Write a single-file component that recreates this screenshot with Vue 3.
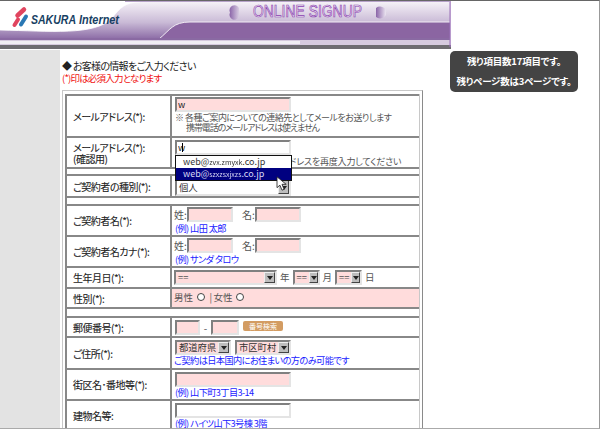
<template>
  <div class="page">
    <header class="banner">
      <svg class="banner-art" viewBox="0 0 451 50" width="451" height="50" xmlns="http://www.w3.org/2000/svg">
        <defs>
          <linearGradient id="sky" x1="0" y1="0" x2="0" y2="1">
            <stop offset="0" stop-color="#f5f1f7" />
            <stop offset="0.55" stop-color="#c9bad6" />
            <stop offset="1" stop-color="#8c6ca6" />
          </linearGradient>
          <linearGradient id="arrow" x1="0" y1="0" x2="1" y2="0">
            <stop offset="0" stop-color="#8a64a8" />
            <stop offset="1" stop-color="#d8cce2" />
          </linearGradient>
          <linearGradient id="arrow2" x1="0" y1="0" x2="1" y2="0">
            <stop offset="0" stop-color="#8a64a8" />
            <stop offset="1" stop-color="#ece6f1" />
          </linearGradient>
        </defs>
        <rect width="451" height="50" fill="#fff" />
        <path d="M0 30 C50 31 95 36 112 18 C120 8 125 2 140 2 L450 2 L450 39 L0 39 Z" fill="url(#sky)" />
        <path d="M0 30 C50 31 95 36 112 18 C120 8 125 2 140 2" fill="none" stroke="#fff" stroke-width="0.8" />
        <path d="M159 39 C170 30 173 22 190 22 L450 22 L450 38 L159 39 Z" fill="#8b65a2" />
        <path d="M159 39 C170 30 173 22 190 22 L450 22" fill="none" stroke="#f2edf5" stroke-width="1" />
        <rect y="38" width="450" height="2" fill="#8a6aa3" />
        <rect y="40" width="450" height="5" fill="#d6cade" />
        <rect y="41" width="300" height="3" fill="#f1eef3" />
        <rect y="45" width="451" height="4" fill="#6e6c70" />
        <rect x="449.5" y="1" width="1.2" height="46" fill="#9a70b8" />
        <rect y="1" x="125" width="325" height="1" fill="#b7a3c9" />
        <path d="M239 8 A5 5 0 0 0 230 12.5 A5 5 0 0 0 239 17 Z" fill="url(#arrow)" />
        <path d="M376 8 A6 5 0 0 1 386 12.5 A6 5 0 0 1 376 17 Z" fill="url(#arrow2)" />
        <text class="art-title" x="253" y="17" textLength="109" lengthAdjust="spacingAndGlyphs">ONLINE SIGNUP</text>
        <path d="M24 9.5 L17.5 15.5" stroke="#e0455f" stroke-width="4.5" stroke-linecap="round" />
        <path d="M18 19.5 L14.5 25" stroke="#e0455f" stroke-width="4" stroke-linecap="round" />
        <path d="M26 16.5 L21 24.5" stroke="#2a78b4" stroke-width="4" stroke-linecap="round" />
        <text class="art-logo" x="31" y="24" textLength="45" lengthAdjust="spacingAndGlyphs">SAKURA</text>
        <text class="art-logo thin" x="79" y="24" textLength="40" lengthAdjust="spacingAndGlyphs">Internet</text>
      </svg>
    </header>

    <div class="remain">
      <p>残り項目数17項目です。</p>
      <p>残りページ数は3ページです。</p>
    </div>

    <div class="body">
      <aside class="side"></aside>
      <main class="main">
        <h1 class="lead">◆ お客様の情報をご入力ください</h1>
        <p class="must">(*)印は必須入力となります</p>

        <div class="frame">
          <table class="form">
            <colgroup>
              <col class="col-label" />
              <col />
            </colgroup>
            <tbody>
              <tr class="h42">
                <th>メールアドレス(*):</th>
                <td>
                  <input class="text wide req" value="w" readonly />
                  <div class="note">※ 各種ご案内についての連絡先としてメールをお送りします<br /><span class="indent">携帯電話のメールアドレスは使えません</span></div>
                </td>
              </tr>
              <tr class="h31">
                <th>メールアドレス(*):<br />(確認用)</th>
                <td class="pad2">
                  <div class="combo">
                    <input class="text wide" value="w" readonly />
                    <span class="caret"></span>
                    <div class="suggest">
                      <div class="opt">web@<span class="smudge">zvx.zmyxk</span>.co.jp</div>
                      <div class="opt on">web@<span class="smudge">szxzsxjxzs</span>.co.jp</div>
                      <svg class="pointer" viewBox="0 0 14 18" width="12" height="15" xmlns="http://www.w3.org/2000/svg">
                        <path d="M1 1 L1 14 L4.5 11 L7 17 L9.5 16 L7 10 L12 10 Z" fill="#fff" stroke="#222" stroke-width="1" />
                      </svg>
                    </div>
                  </div>
                  <div class="note confirm">確認のため、上記のメールアドレスを再度入力してください</div>
                </td>
              </tr>
              <tr class="h7"><td colspan="2"></td></tr>
              <tr class="h22">
                <th>ご契約者の種別(*):</th>
                <td class="pad0">
                  <div class="select plain wide-sel"><span class="val">個人</span><span class="btn"></span></div>
                </td>
              </tr>
              <tr class="h8"><td colspan="2"></td></tr>
              <tr class="h31">
                <th>ご契約者名(*):</th>
                <td>
                  <div class="names">
                    <span>姓:</span><input class="text name req" readonly />
                    <span class="gap">名:</span><input class="text name req" readonly />
                  </div>
                  <div class="hint">(例) 山田 太郎</div>
                </td>
              </tr>
              <tr class="h31">
                <th>ご契約者名カナ(*):</th>
                <td>
                  <div class="names">
                    <span>姓:</span><input class="text name req" readonly />
                    <span class="gap">名:</span><input class="text name req" readonly />
                  </div>
                  <div class="hint">(例) サンダ タロウ</div>
                </td>
              </tr>
              <tr class="h21">
                <th>生年月日(*):</th>
                <td class="pad2">
                  <div class="birth">
                    <div class="select year"><span class="val">==</span><span class="btn"></span></div>
                    <span>年</span>
                    <div class="select small"><span class="val">==</span><span class="btn"></span></div>
                    <span>月</span>
                    <div class="select small"><span class="val">==</span><span class="btn"></span></div>
                    <span>日</span>
                  </div>
                </td>
              </tr>
              <tr class="h20">
                <th>性別(*):</th>
                <td class="reqcell">
                  <div class="sex">
                    <span>男性</span><span class="radio"></span>
                    <span class="bar">|</span>
                    <span>女性</span><span class="radio"></span>
                  </div>
                </td>
              </tr>
              <tr class="h9"><td colspan="2"></td></tr>
              <tr class="h20">
                <th>郵便番号(*):</th>
                <td class="pad2">
                  <div class="zip">
                    <input class="text z1 req" readonly />
                    <span class="dash">-</span>
                    <input class="text z2 req" readonly />
                    <span class="zipbtn">番号検索</span>
                  </div>
                </td>
              </tr>
              <tr class="h32">
                <th>ご住所(*):</th>
                <td class="pad2">
                  <div class="addr">
                    <div class="select pref"><span class="val">都道府県</span><span class="btn"></span></div>
                    <div class="select pref"><span class="val">市区町村</span><span class="btn"></span></div>
                  </div>
                  <div class="hint flush">ご契約は日本国内にお住まいの方のみ可能です</div>
                </td>
              </tr>
              <tr class="h31">
                <th>街区名･番地等(*):</th>
                <td class="pad2">
                  <input class="text wide req" readonly />
                  <div class="hint">(例) 山下町3丁目3-14</div>
                </td>
              </tr>
              <tr class="h31">
                <th>建物名等:</th>
                <td class="pad2">
                  <input class="text wide" readonly />
                  <div class="hint">(例) ハイツ山下3号棟 3階</div>
                </td>
              </tr>
            </tbody>
          </table>
        </div>
      </main>
    </div>
  </div>
</template>

<script setup>
</script>

<style>
html,
body {
  margin: 0;
  background: #fff;
}
</style>

<style scoped>
.page {
  position: relative;
  width: 600px;
  height: 429px;
  box-sizing: border-box;
  overflow: hidden;
  background: #fff;
  border-top: 1px solid #666;
  border-right: 1px solid #999;
  border-bottom: 1px solid #aaa;
  color: #333;
  font-family: "Noto Sans CJK JP", "Liberation Sans", sans-serif;
  font-size: 10px;
  line-height: 11px;
  font-feature-settings: "palt";
}

.banner {
  height: 50px;
  margin-top: -1px;
}

.banner-art {
  display: block;
}

.art-title {
  font-family: "Liberation Sans", sans-serif;
  font-size: 17px;
  fill: #efe8f3;
  stroke: #8b3fb0;
  stroke-width: 0.7px;
}

.art-logo {
  font-family: "Liberation Sans", sans-serif;
  font-size: 13px;
  font-weight: 700;
  font-style: italic;
  fill: #173f63;
}

.art-logo.thin {
  font-size: 12px;
}

.remain {
  position: absolute;
  left: 450px;
  top: 50px;
  width: 128px;
  height: 41px;
  box-sizing: border-box;
  padding-top: 5px;
  background: #444;
  border-radius: 5px;
  color: #fff;
  font-weight: 700;
  text-align: center;
  font-size: 9.5px;
  letter-spacing: -0.2px;
}

.remain p {
  margin: 0 0 9px;
}

.body {
  display: flex;
  height: 378px;
}

.side {
  width: 60px;
  flex: none;
  background: #e3e3e3;
}

.main {
  flex: 1;
  padding: 10px 0 0 2px;
  min-width: 0;
}

.lead {
  margin: 0;
  font-size: 10px;
  font-weight: 400;
  line-height: 12px;
  letter-spacing: -0.7px;
  color: #222;
}

.must {
  margin: 0;
  font-size: 9.5px;
  line-height: 12px;
  letter-spacing: -0.8px;
  color: #f01010;
}

.frame {
  width: 361px;
  box-sizing: border-box;
  margin-top: 6px;
  padding: 3px 2px 0;
  border: 1px solid;
  border-color: #c8c8c8 #8a8a8a #8a8a8a #c8c8c8;
}

.form {
  width: 100%;
  table-layout: fixed;
  border-collapse: separate;
  border-spacing: 0;
  border-right: 1px solid #c8c8c8;
}

.col-label {
  width: 105px;
}

.form th,
.form td {
  box-sizing: border-box;
  border-top: 2px solid #888;
  border-left: 2px solid #888;
}

.form th {
  padding: 0 0 0 6px;
  font-weight: 400;
  text-align: left;
  vertical-align: middle;
  letter-spacing: -0.5px;
  color: #222;
  -webkit-text-stroke: 0.1px #222;
}

.form td {
  padding: 1px 0 0 3px;
  vertical-align: top;
}

.form td.pad0 {
  padding-top: 0;
}

.form td.pad2 {
  padding-top: 2px;
}

.h7 td { height: 7px; }
.h8 td { height: 8px; }
.h9 td { height: 9px; }
.h20 th, .h20 td { height: 20px; }
.h21 th, .h21 td { height: 21px; }
.h22 th, .h22 td { height: 22px; }
.h31 th, .h31 td { height: 31px; }
.h32 th, .h32 td { height: 32px; }
.h42 th, .h42 td { height: 42px; }

.text {
  display: block;
  box-sizing: border-box;
  height: 15px;
  margin: 0;
  padding: 0 1px;
  background: #fff;
  border: 2px solid;
  border-color: #808080 #e4e4e4 #e4e4e4 #808080;
  border-radius: 0;
  outline: none;
  color: #222;
  font-family: inherit;
  font-size: 9px;
}

.req {
  background: #ffdcdc;
}

.wide {
  width: 116px;
}

.name {
  width: 46px;
}

.note {
  margin-top: 1px;
  color: #555;
  font-size: 9px;
  line-height: 10px;
  letter-spacing: -0.5px;
  white-space: nowrap;
}

.note.confirm {
  margin-top: 2px;
  padding-left: 8px;
  letter-spacing: -0.2px;
}

.indent {
  padding-left: 11px;
  letter-spacing: -1.1px;
}

.hint {
  color: #1a1aff;
  font-size: 9.2px;
  line-height: 10px;
  letter-spacing: -0.6px;
  white-space: nowrap;
}

.names + .hint {
  margin-top: 1px;
}

.hint.flush {
  margin-left: -1px;
}

.combo {
  position: relative;
  width: 116px;
}

.caret {
  position: absolute;
  left: 7px;
  top: 3px;
  width: 1px;
  height: 9px;
  background: #000;
}

.suggest {
  position: absolute;
  left: 0;
  top: 15px;
  width: 117px;
  height: 26px;
  box-sizing: border-box;
  background: #fff;
  border: 1px solid #111;
  z-index: 2;
}

.opt {
  height: 12px;
  padding-left: 7px;
  line-height: 12px;
  font-size: 9px;
  color: #333;
}

.opt.on {
  background: #000080;
  color: #d8d8f5;
}

.smudge {
  filter: blur(0.6px);
  font-size: 7px;
}

.pointer {
  position: absolute;
  left: 100px;
  top: 20px;
}

.select {
  display: flex;
  box-sizing: border-box;
  height: 15px;
  overflow: hidden;
  background: #ffdcdc;
  border: 2px solid;
  border-color: #808080 #e4e4e4 #e4e4e4 #808080;
}

.select.plain {
  background: #fff;
  height: 20px;
}

.val {
  flex: 1;
  padding-left: 2px;
  font-size: 9.3px;
  line-height: 11px;
  white-space: nowrap;
  min-width: 0;
}

.plain .val {
  line-height: 19px;
}

.btn {
  flex: none;
  width: 11px;
  background: #bdbdbd;
  border: 1px solid;
  border-color: #eee #444 #444 #eee;
  box-sizing: border-box;
  position: relative;
}

.btn::after {
  content: "";
  position: absolute;
  left: 2px;
  top: 3px;
  border: 3px solid transparent;
  border-top: 4px solid #222;
  border-bottom: 0;
}

.plain .btn::after {
  top: 7px;
}

.wide-sel {
  width: 116px;
}

.birth {
  display: flex;
  align-items: center;
  gap: 3px;
  margin-left: -1px;
  font-size: 9.5px;
  color: #555;
}

.year {
  width: 103px;
}

.small {
  width: 27px;
}

.small .btn {
  width: 9px;
}

.small .btn::after {
  left: 1px;
}

.reqcell {
  background: #ffdcdc;
}

.form td.reqcell {
  padding-top: 3px;
}

.sex {
  display: flex;
  align-items: center;
  margin-left: -1px;
  font-size: 9.5px;
  color: #555;
}

.radio {
  width: 8px;
  height: 8px;
  box-sizing: border-box;
  margin: -2px 0 0 3.5px;
  background: #fff;
  border: 1px solid #444;
  border-radius: 50%;
}

.bar {
  margin: 0 1.5px 0 5px;
}

.names {
  display: flex;
  align-items: center;
  margin-left: -1px;
  color: #555;
}

.names span {
  width: 13px;
  flex: none;
}

.names span.gap {
  margin-left: 9px;
}

.zip {
  display: flex;
  align-items: flex-start;
}

.z1 {
  width: 25px;
}

.z2 {
  width: 28px;
}

.dash {
  width: 11px;
  text-align: center;
  line-height: 15px;
  color: #555;
}

.zipbtn {
  margin: 1px 0 0 4px;
  width: 40px;
  height: 10px;
  background: #d39c62;
  border-radius: 2px;
  color: #fff;
  font-size: 7px;
  line-height: 10px;
  text-align: center;
}

.addr {
  display: flex;
  gap: 4px;
}

.pref {
  width: 56px;
  background: #ffdcdc;
}
</style>
